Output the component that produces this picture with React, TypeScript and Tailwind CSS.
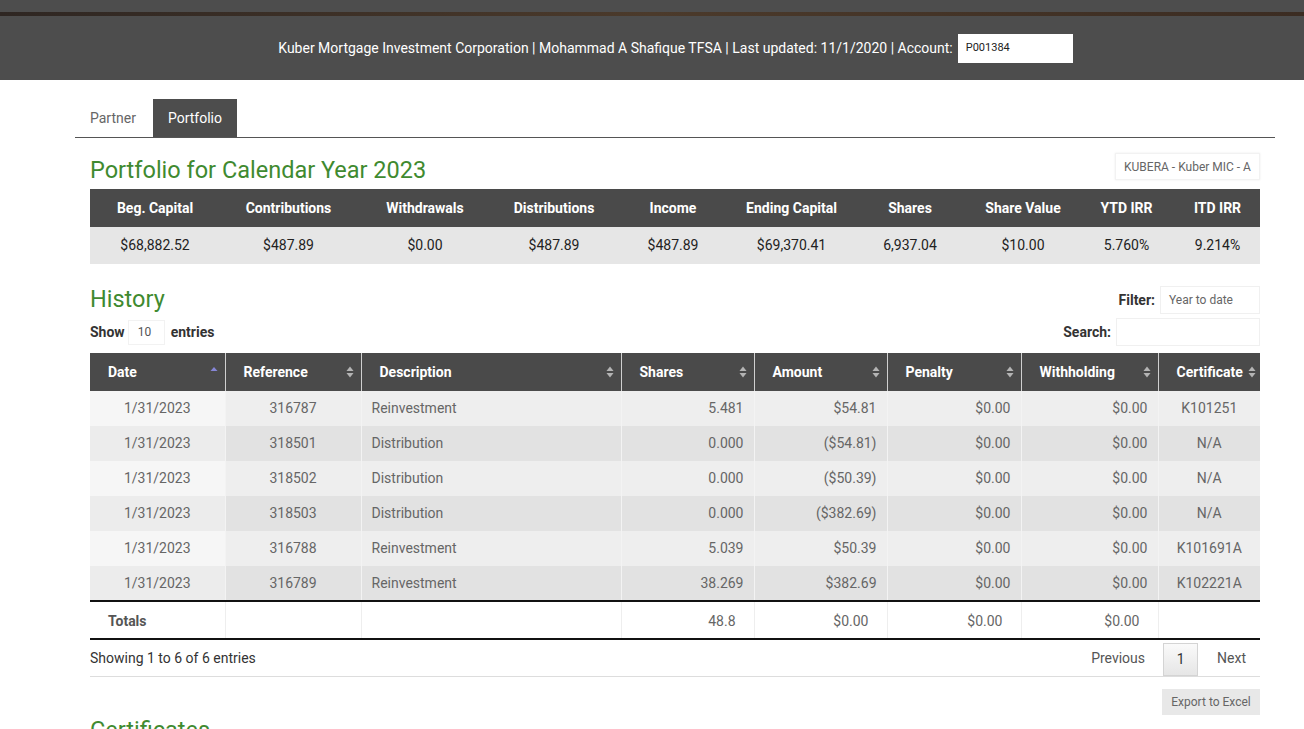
const summaryCols = [
  { label: "Beg. Capital", value: "$68,882.52", w: "w-[130px]" },
  { label: "Contributions", value: "$487.89", w: "w-[137px]" },
  { label: "Withdrawals", value: "$0.00", w: "w-[136px]" },
  { label: "Distributions", value: "$487.89", w: "w-[122px]" },
  { label: "Income", value: "$487.89", w: "w-[116px]" },
  { label: "Ending Capital", value: "$69,370.41", w: "w-[121px]" },
  { label: "Shares", value: "6,937.04", w: "w-[116px]" },
  { label: "Share Value", value: "$10.00", w: "w-[110px]" },
  { label: "YTD IRR", value: "5.760%", w: "w-[97px]" },
  { label: "ITD IRR", value: "9.214%", w: "w-[85px]" },
];

const historyCols = [
  { label: "Date", w: "w-[135px]" },
  { label: "Reference", w: "w-[136px]" },
  { label: "Description", w: "w-[260px]" },
  { label: "Shares", w: "w-[133px]" },
  { label: "Amount", w: "w-[133px]" },
  { label: "Penalty", w: "w-[134px]" },
  { label: "Withholding", w: "w-[137px]" },
  { label: "Certificate", w: "w-[102px]" },
];

const rows = [
  ["1/31/2023", "316787", "Reinvestment", "5.481", "$54.81", "$0.00", "$0.00", "K101251"],
  ["1/31/2023", "318501", "Distribution", "0.000", "($54.81)", "$0.00", "$0.00", "N/A"],
  ["1/31/2023", "318502", "Distribution", "0.000", "($50.39)", "$0.00", "$0.00", "N/A"],
  ["1/31/2023", "318503", "Distribution", "0.000", "($382.69)", "$0.00", "$0.00", "N/A"],
  ["1/31/2023", "316788", "Reinvestment", "5.039", "$50.39", "$0.00", "$0.00", "K101691A"],
  ["1/31/2023", "316789", "Reinvestment", "38.269", "$382.69", "$0.00", "$0.00", "K102221A"],
];

const cellAlign = [
  "text-center",
  "text-center",
  "text-left",
  "text-right",
  "text-right",
  "text-right",
  "text-right",
  "text-center",
];

function SortIcon({ active }: { active?: boolean }) {
  if (active) {
    return (
      <svg width="8" height="12" viewBox="0 0 8 12" className="shrink-0">
        <path d="M4 1 L7.5 5 L0.5 5 Z" fill="#8686d6" />
      </svg>
    );
  }
  return (
    <svg width="8" height="12" viewBox="0 0 8 12" className="shrink-0">
      <path d="M4 0.5 L7.5 5 L0.5 5 Z" fill="#b4b4b4" />
      <path d="M4 11.5 L7.5 7 L0.5 7 Z" fill="#b4b4b4" />
    </svg>
  );
}

export default function App() {
  return (
    <div className="w-[1304px] h-[729px] overflow-hidden bg-white font-['Roboto','Liberation_Sans',sans-serif]">
      {/* top bar */}
      <div className="h-[80px] bg-[#4d4d4d] flex flex-col">
        <div className="mt-[12px] h-[4px] bg-gradient-to-r from-[#2e2622] via-[#4b3a2b] to-[#3b2c22]" />
        <div className="flex-1 flex items-center justify-center gap-[5px] pl-[47px]">
          <span className="text-white text-[14px]">
            Kuber Mortgage Investment Corporation | Mohammad A Shafique TFSA | Last updated: 11/1/2020 | Account:
          </span>
          <div className="w-[115px] h-[29px] bg-white flex items-center px-[8px] text-[11px] text-[#222]">
            P001384
          </div>
        </div>
      </div>

      {/* tabs */}
      <div className="ml-[75px] w-[1200px] mt-[19px] flex border-b border-[#555]">
        <div className="h-[38px] pl-[15px] pr-[17px] flex items-center text-[14px] text-[#666]">Partner</div>
        <div className="h-[38px] px-[15px] flex items-center text-[14px] text-white bg-[#4d4d4d]">Portfolio</div>
      </div>

      <div className="ml-[90px] w-[1170px]">
        {/* portfolio title */}
        <div className="mt-[14px] h-[37px] flex items-center justify-between">
          <h1 className="text-[23.5px] text-[#3f8a30] leading-none">Portfolio for Calendar Year 2023</h1>
          <div className="-mt-[8px] h-[27px] w-[145px] flex items-center justify-center text-[12px] text-[#666] border border-[#f2f2f2] shadow-[0_0_2px_rgba(0,0,0,0.08)]">
            KUBERA - Kuber MIC - A
          </div>
        </div>

        {/* summary table */}
        <table className="w-full table-fixed border-collapse">
          <colgroup>
            {summaryCols.map((c) => (
              <col key={c.label} className={c.w} />
            ))}
          </colgroup>
          <thead>
            <tr className="h-[38px] bg-[#4a4a4a]">
              {summaryCols.map((c) => (
                <th key={c.label} className="text-center text-white text-[14px] font-bold">
                  {c.label}
                </th>
              ))}
            </tr>
          </thead>
          <tbody>
            <tr className="h-[37px] bg-[#e6e6e6]">
              {summaryCols.map((c) => (
                <td key={c.label} className="text-center text-[14px] text-[#222]">
                  {c.value}
                </td>
              ))}
            </tr>
          </tbody>
        </table>

        {/* history header */}
        <div className="mt-[22px] h-[28px] flex items-center justify-between">
          <h2 className="text-[23.5px] text-[#3f8a30] leading-none">History</h2>
          <div className="flex items-center gap-[5px]">
            <span className="text-[14px] font-bold text-[#333]">Filter:</span>
            <div className="w-[100px] h-[28px] flex items-center px-[8px] text-[12px] text-[#666] border border-[#f0f0f0]">
              Year to date
            </div>
          </div>
        </div>

        <div className="mt-[4px] h-[28px] flex items-center justify-between">
          <div className="flex items-center text-[14px] font-bold text-[#333]">
            <span>Show</span>
            <div className="ml-[3px] w-[37px] h-[25px] flex items-center px-[9px] text-[12px] font-normal text-[#555] border border-[#f2f2f2]">
              10
            </div>
            <span className="ml-[6px]">entries</span>
          </div>
          <div className="flex items-center gap-[5px]">
            <span className="text-[14px] font-bold text-[#333]">Search:</span>
            <div className="w-[144px] h-[28px] border border-[#f0f0f0]" />
          </div>
        </div>

        {/* history table */}
        <table className="mt-[7px] w-full table-fixed border-collapse">
          <colgroup>
            {historyCols.map((c) => (
              <col key={c.label} className={c.w} />
            ))}
          </colgroup>
          <thead>
            <tr className="h-[38px] bg-[#4a4a4a]">
              {historyCols.map((c, i) => (
                <th
                  key={c.label}
                  className={`text-left text-white text-[14px] font-bold ${i > 0 ? "border-l border-[#d0d0d0]" : ""}`}
                >
                  <div className={`flex items-center justify-between ${i === 7 ? "pl-[18px] pr-[4px]" : "pl-[18px] pr-[7px]"}`}>
                    <span>{c.label}</span>
                    <SortIcon active={i === 0} />
                  </div>
                </th>
              ))}
            </tr>
          </thead>
          <tbody>
            {rows.map((r, ri) => (
              <tr key={r[1]} className={`h-[35px] ${ri % 2 === 0 ? "bg-[#eeeeee]" : "bg-[#e2e2e2]"}`}>
                {r.map((v, ci) => (
                  <td
                    key={ci}
                    className={`px-[10px] text-[14px] text-[#666] ${cellAlign[ci]} ${
                      ci === 0 ? (ri % 2 === 0 ? "bg-[#f6f6f6]" : "bg-[#ececec]") : "border-l border-[#f3f3f3]"
                    }`}
                  >
                    {v}
                  </td>
                ))}
              </tr>
            ))}
          </tbody>
          <tfoot>
            <tr className="h-[38px] border-t-2 border-b-2 border-[#111]">
              <td className="pl-[18px] pt-[3px] text-[14px] font-bold text-[#555]">Totals</td>
              <td className="border-l border-[#eeeeee]" />
              <td className="border-l border-[#eeeeee]" />
              <td className="pr-[18px] pt-[3px] text-right text-[14px] text-[#666] border-l border-[#eeeeee]">48.8</td>
              <td className="pr-[18px] pt-[3px] text-right text-[14px] text-[#666] border-l border-[#eeeeee]">$0.00</td>
              <td className="pr-[18px] pt-[3px] text-right text-[14px] text-[#666] border-l border-[#eeeeee]">$0.00</td>
              <td className="pr-[18px] pt-[3px] text-right text-[14px] text-[#666] border-l border-[#eeeeee]">$0.00</td>
              <td className="border-l border-[#eeeeee]" />
            </tr>
          </tfoot>
        </table>

        {/* footer of table */}
        <div className="h-[37px] flex justify-between border-b border-[#dddddd]">
          <span className="self-center text-[14px] text-[#333]">Showing 1 to 6 of 6 entries</span>
          <div className="flex items-end">
            <span className="self-center mr-[18px] text-[14px] text-[#555]">Previous</span>
            <div className="w-[35px] h-[33px] flex items-center justify-center text-[14px] text-[#333] border border-[#d4d4d4] bg-gradient-to-b from-[#fafafa] to-[#e6e6e6]">
              1
            </div>
            <span className="self-center ml-[19px] mr-[14px] text-[14px] text-[#555]">Next</span>
          </div>
        </div>

        <div className="mt-[12px] flex justify-end">
          <div className="w-[98px] h-[26px] flex items-center justify-center bg-[#e8e8e8] text-[12px] text-[#666]">
            Export to Excel
          </div>
        </div>

        <h2 className="mt-[4px] text-[23.5px] text-[#3f8a30] leading-none">Certificates</h2>
      </div>
    </div>
  );
}
